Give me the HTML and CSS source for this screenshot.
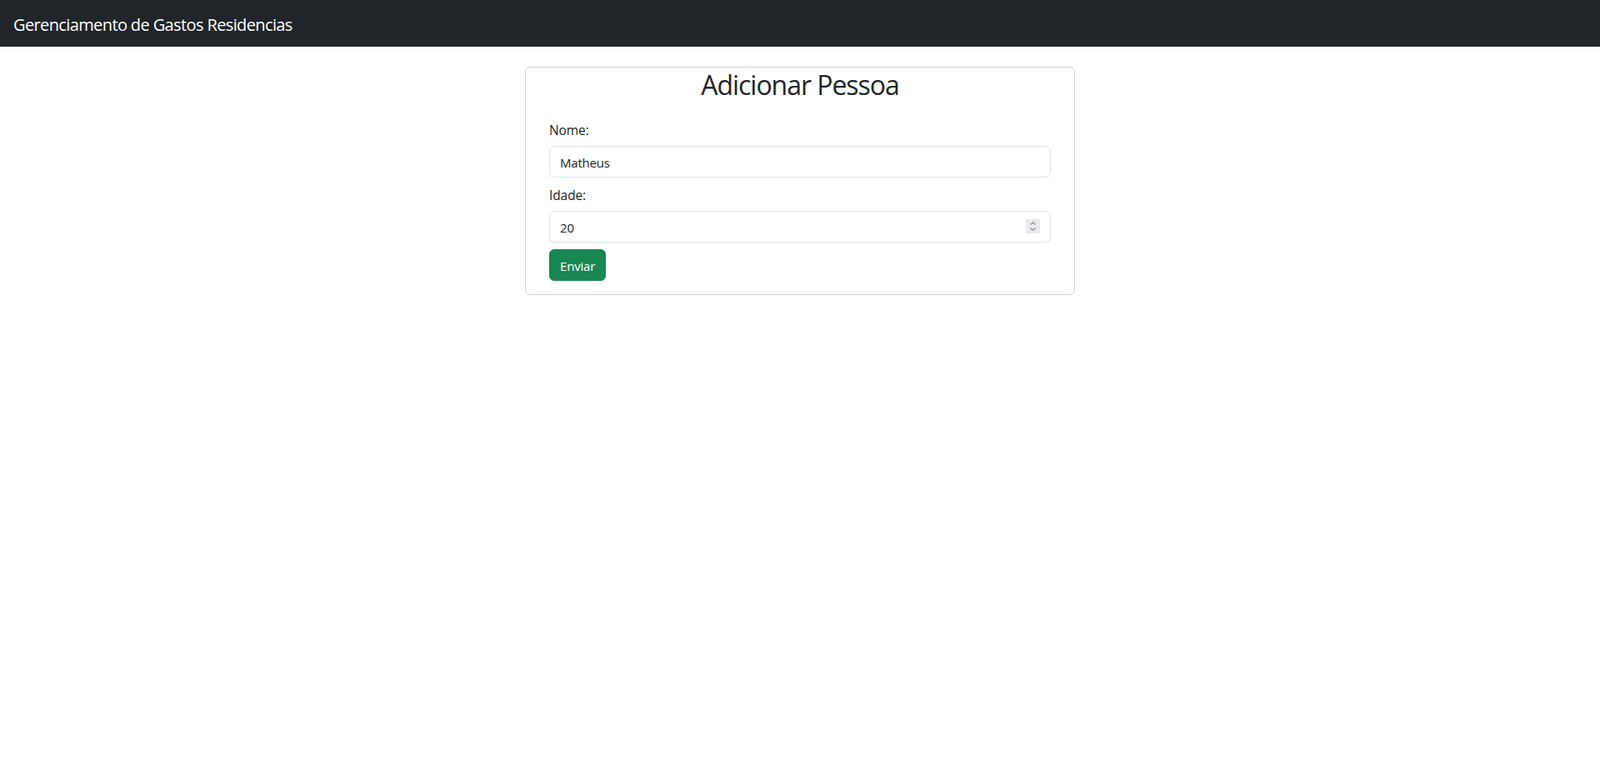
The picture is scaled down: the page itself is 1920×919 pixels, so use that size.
FILE: index.html
```html
<!DOCTYPE html>
<html lang="pt-BR">
<head>
<meta charset="utf-8">
<title>Gerenciamento de Gastos Residencias</title>
<link rel="stylesheet" href="styles.css">
</head>
<body>
<nav class="navbar">
  <span class="brand">Gerenciamento de Gastos Residencias</span>
</nav>
<main class="card">
  <h2 class="card-title">Adicionar Pessoa</h2>
  <form class="form">
    <div class="field">
      <label class="label" for="nome">Nome:</label>
      <input class="control" id="nome" type="text" value="Matheus">
    </div>
    <div class="field">
      <label class="label" for="idade">Idade:</label>
      <div class="number-wrap">
        <input class="control" id="idade" type="number" value="20">
        <span class="spinner" aria-hidden="true">
          <svg width="17" height="17" viewBox="0 0 17 17">
            <path d="M5.5 6.5 L8.5 3.8 L11.5 6.5" fill="none" stroke="#8a8a92" stroke-width="1.1"/>
            <path d="M5.5 10.5 L8.5 13.2 L11.5 10.5" fill="none" stroke="#8a8a92" stroke-width="1.1"/>
          </svg>
        </span>
      </div>
    </div>
    <button class="btn" type="button">Enviar</button>
  </form>
</main>
</body>
</html>
```

FILE: styles.css
```css
* { box-sizing: border-box; }
html, body { margin: 0; padding: 0; }
body {
  font-family: "Open Sans", "Noto Sans", sans-serif;
  font-size: 16px;
  line-height: 1.5;
  color: #212529;
  background: #fff;
}
.navbar {
  background: #212529;
  height: 56px;
  padding: 8px 16px;
  display: flex;
  align-items: center;
}
.brand {
  color: #fff;
  font-size: 20px;
  line-height: 30px;
  padding: 7px 0 3px;
  letter-spacing: -0.62px;
}
.card {
  width: 660px;
  margin: 24px auto 0;
  border: 1px solid rgba(0,0,0,0.175);
  border-radius: 6px;
  padding: 0 28px 16px;
}
.card-title {
  margin: 2px 0 22px;
  font-size: 32px;
  font-weight: 400;
  line-height: 38px;
  text-align: center;
  letter-spacing: -1.05px;
}
.form { display: flex; flex-direction: column; align-items: flex-start; }
.field { width: 100%; margin-bottom: 8px; }
.label {
  display: block;
  margin-bottom: 7px;
  padding-top: 1px;
  line-height: 24px;
  font-size: 15.5px;
  letter-spacing: -0.1px;
}
.number-wrap { position: relative; }
.control {
  display: block;
  width: 100%;
  height: 38px;
  padding: 7px 12px 5px;
  font-family: inherit;
  font-size: 15px;
  letter-spacing: -0.2px;
  line-height: 24px;
  color: #212529;
  background: #fff;
  border: 1px solid #dee2e6;
  border-radius: 6px;
  outline: none;
}
.control::-webkit-inner-spin-button,
.control::-webkit-outer-spin-button {
  -webkit-appearance: none;
  margin: 0;
}
.spinner {
  position: absolute;
  right: 13px;
  top: 10px;
  width: 17px;
  height: 17px;
  background: #e9e9ed;
  display: flex;
}
.btn {
  height: 38px;
  padding: 7px 12px 5px;
  font-family: inherit;
  font-size: 15px;
  letter-spacing: -0.2px;
  line-height: 24px;
  color: #fff;
  background: #198754;
  border: 1px solid #198754;
  border-radius: 6px;
  cursor: pointer;
}
```
